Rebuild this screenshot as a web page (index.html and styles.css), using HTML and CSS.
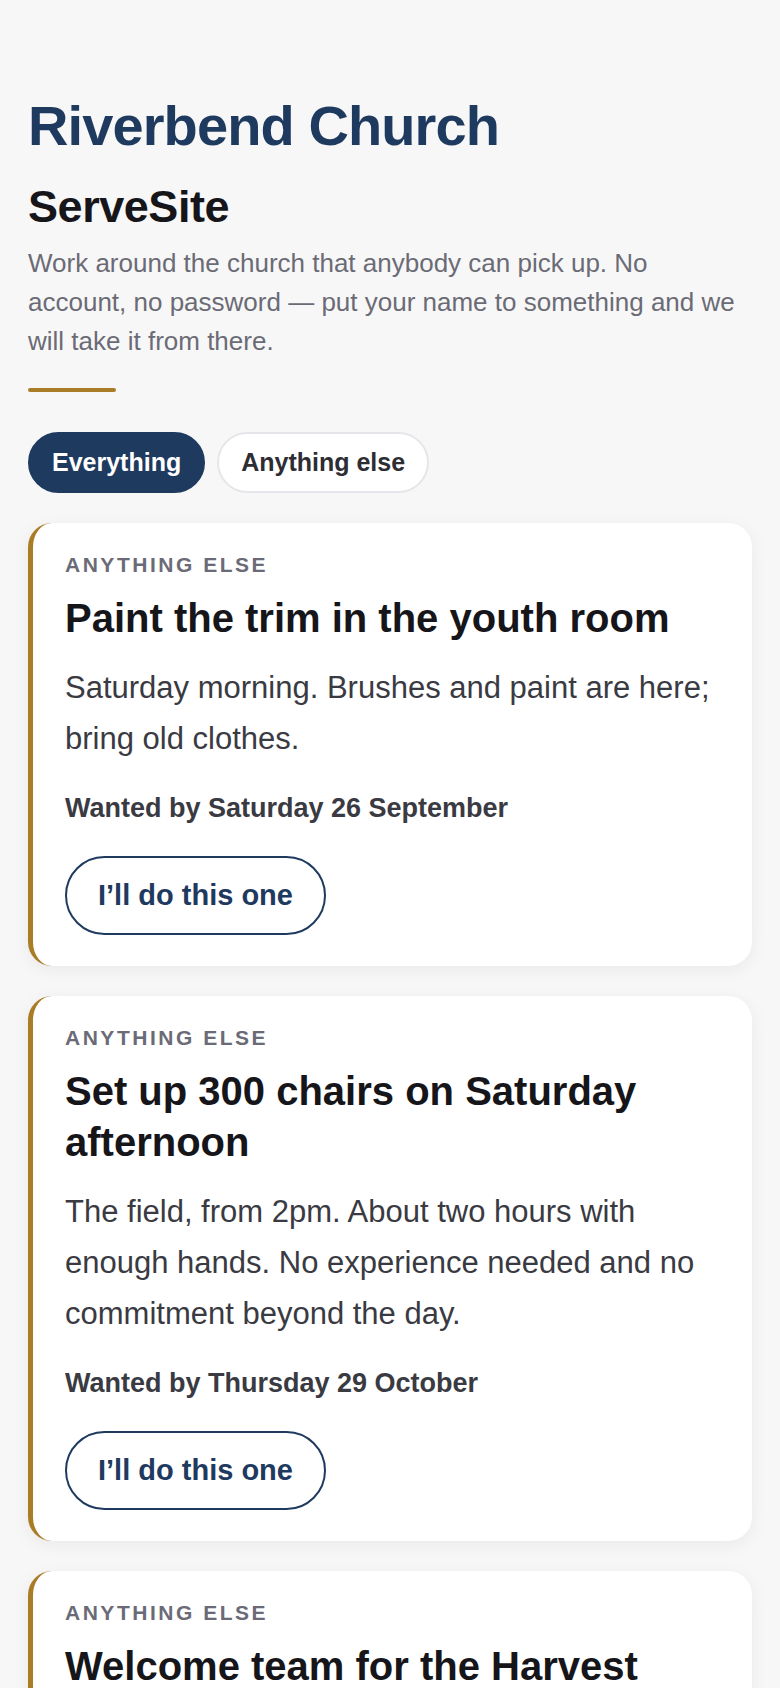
FILE: index.html
```html
<!DOCTYPE html>
<html lang="en">
<head>
    <meta charset="UTF-8">
    <meta name="viewport" content="width=device-width, initial-scale=1.0">
    <title>ServeSite - Riverbend Church</title>
    <link rel="stylesheet" href="styles.css">
</head>
<body>
    <main class="page">
        <header class="site-header">
            <h1 class="church-name">Riverbend Church</h1>
            <h2 class="site-name">ServeSite</h2>
            <p class="intro">
                Work around the church that anybody can pick up. No account, no password — put your name to something and we will take it from there.
            </p>
            <div class="rule"></div>
        </header>

        <!-- Filtros -->
        <nav class="filters">
            <button class="chip active">Everything</button>
            <button class="chip">Anything else</button>
        </nav>

        <section class="tasks">
            <article class="task">
                <div class="task-kind">Anything else</div>
                <h3 class="task-title">Paint the trim in the youth room</h3>
                <p class="task-text">Saturday morning. Brushes and paint are here; bring old clothes.</p>
                <p class="task-due">Wanted by Saturday 26 September</p>
                <button class="take">I’ll do this one</button>
            </article>

            <article class="task">
                <div class="task-kind">Anything else</div>
                <h3 class="task-title">Set up 300 chairs on Saturday afternoon</h3>
                <p class="task-text">The field, from 2pm. About two hours with enough hands. No experience needed and no commitment beyond the day.</p>
                <p class="task-due">Wanted by Thursday 29 October</p>
                <button class="take">I’ll do this one</button>
            </article>

            <article class="task">
                <div class="task-kind">Anything else</div>
                <h3 class="task-title">Welcome team for the Harvest Supper</h3>
                <p class="task-text">Stand at the door, say hello and point people to their tables.</p>
                <p class="task-due">Wanted by Friday 2 October</p>
                <button class="take">I’ll do this one</button>
            </article>
        </section>
    </main>
</body>
</html>
```

FILE: styles.css
```css
body {
    font-family: 'Liberation Sans', Arial, sans-serif;
    background-color: #f7f7f8;
    margin: 0;
    color: #3a3a42;
}

.page {
    padding: 95px 28px 60px;
}

/* Cabeçalho */
.church-name {
    color: #1f3a5f;
    font-size: 56px;
    line-height: 1.1;
    letter-spacing: -0.016em;
    font-weight: bold;
    margin: 0 0 23px;
}

.site-name {
    color: #16161a;
    font-size: 45px;
    line-height: 1.2;
    letter-spacing: -0.01em;
    font-weight: bold;
    margin: 0 0 10px;
}

.intro {
    color: #6b6b75;
    font-size: 26px;
    line-height: 39px;
    margin: 0;
}

.rule {
    width: 88px;
    height: 4px;
    border-radius: 2px;
    background-color: #a97c26;
    margin: 27px 0 40px;
}

/* Filtros */
.filters {
    display: flex;
    gap: 12px;
    margin-bottom: 30px;
}

.chip {
    font-family: inherit;
    font-size: 25px;
    font-weight: bold;
    line-height: 29px;
    padding: 14px 22px;
    border-radius: 999px;
    border: 2px solid #e6e6ea;
    background-color: #fff;
    color: #2d2d33;
}

.chip.active {
    background-color: #1f3a5f;
    border-color: #1f3a5f;
    color: #fff;
}

/* Cards */
.tasks {
    display: flex;
    flex-direction: column;
    gap: 30px;
}

.task {
    background-color: #fff;
    border-left: 5px solid #a97c26;
    border-radius: 24px;
    padding: 28px 32px 31px;
    box-shadow: 0 4px 18px rgba(0, 0, 0, 0.06);
}

.task-kind {
    color: #6b6b78;
    font-size: 21px;
    font-weight: bold;
    line-height: 27px;
    letter-spacing: 0.12em;
    text-transform: uppercase;
}

.task-title {
    color: #16161a;
    font-size: 40px;
    line-height: 51px;
    font-weight: bold;
    margin: 15px 0 18px;
}

.task-text {
    font-size: 31px;
    line-height: 51px;
    margin: 0;
}

.task-due {
    font-size: 27px;
    font-weight: bold;
    line-height: 35px;
    margin: 27px 0 30px;
}

.take {
    font-family: inherit;
    font-size: 29px;
    font-weight: bold;
    line-height: 35px;
    color: #1f3a5f;
    background-color: #fff;
    border: 2px solid #1f3a5f;
    border-radius: 999px;
    padding: 20px 31px;
}
```
